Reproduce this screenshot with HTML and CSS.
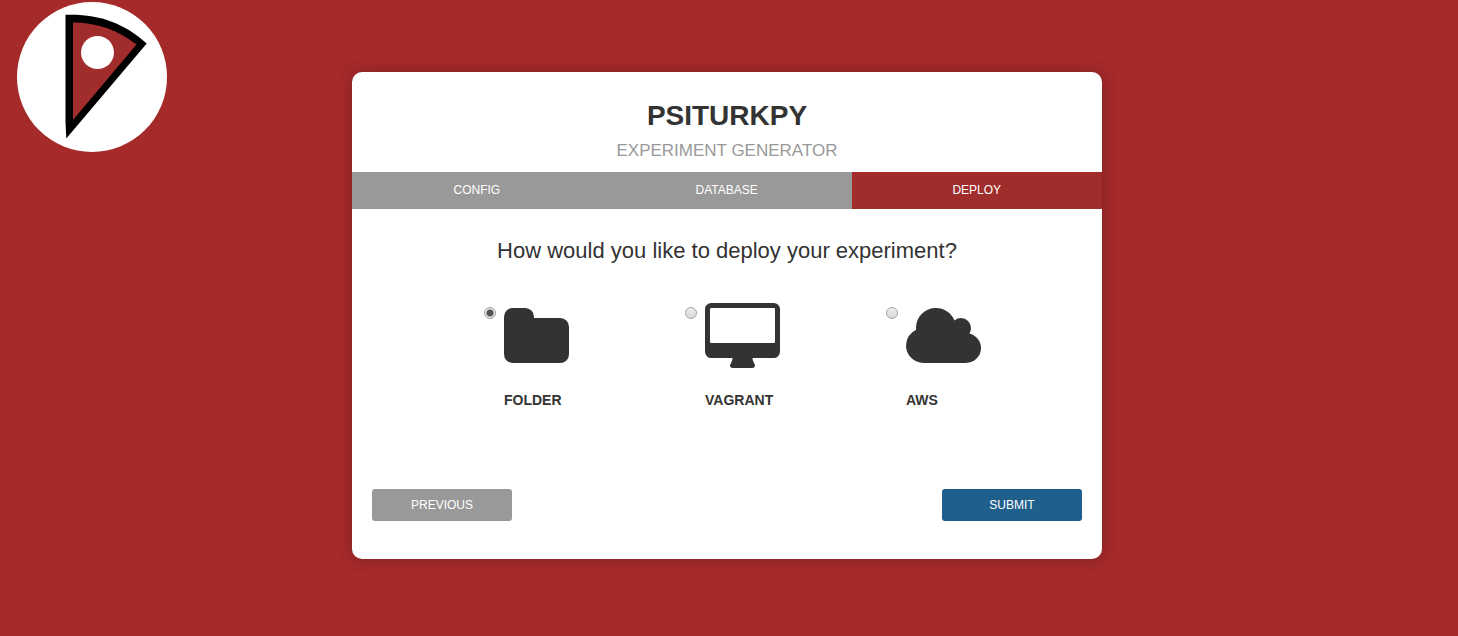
FILE: index.html
```html
<!DOCTYPE html>
<html lang="en">
<head>
<meta charset="utf-8">
<meta name="viewport" content="width=device-width, initial-scale=1">
<title>PsiturkPy Experiment Generator</title>
<link rel="stylesheet" href="styles.css">
</head>
<body>
<div class="page">
  <header class="brand">
    <svg class="logo" viewBox="0 0 150 150" role="img" aria-label="PsiturkPy logo">
      <circle cx="75" cy="75" r="75" fill="#fff"/>
      <path d="M48.500 12.800C80 11.500 106 20 129.700 41.500L49.300 136.500L48.500 120Z" fill="#000"/>
      <path d="M56 20.500C80 20.500 101 28 119.500 42.500L56 118Z" fill="#a02c2c"/>
      <circle cx="80.500" cy="50.500" r="16.500" fill="#fff"/>
    </svg>
  </header>
  <main class="card">
    <h1 class="title">PSITURKPY</h1>
    <p class="subtitle">EXPERIMENT GENERATOR</p>
    <ol class="steps">
      <li class="step">CONFIG</li>
      <li class="step">DATABASE</li>
      <li class="step step-active" aria-current="step">DEPLOY</li>
    </ol>
    <form class="deploy">
      <h2 class="question" id="question">How would you like to deploy your experiment?</h2>
      <div class="options" role="radiogroup" aria-labelledby="question">
        <div class="option">
          <input class="radio" type="radio" name="target" id="folder" value="folder" checked>
          <label class="choice" for="folder">
            <svg class="icon" viewBox="0 0 1920 1664" aria-hidden="true"><path d="M1664 608v704q0 92-66 158t-158 66H224q-92 0-158-66T0 1312V352q0-92 66-158t158-66h320q92 0 158 66t66 158v32h672q92 0 158 66t66 158z"/></svg>
            <span>FOLDER</span>
          </label>
        </div>
        <div class="option">
          <input class="radio" type="radio" name="target" id="vagrant" value="vagrant">
          <label class="choice" for="vagrant">
            <svg class="icon" viewBox="0 0 1920 1664" aria-hidden="true"><path fill-rule="evenodd" d="M1792 992V160q0-13-9.500-22.500T1760 128H160q-13 0-22.500 9.500T128 160v832q0 13 9.500 22.500T160 1024h1600q13 0 22.500-9.500t9.500-22.500zM1920 160v1088q0 66-47 113t-113 47h-544q0 37 16 77.500t32 71 16 43.500q0 26-19 45t-45 19H704q-26 0-45-19t-19-45q0-14 16-44t32-70 16-78H160q-66 0-113-47T0 1248V160Q0 94 47 47T160 0h1600q66 0 113 47t47 113z"/></svg>
            <span>VAGRANT</span>
          </label>
        </div>
        <div class="option">
          <input class="radio" type="radio" name="target" id="aws" value="aws">
          <label class="choice" for="aws">
            <svg class="icon" viewBox="0 0 1920 1664" aria-hidden="true"><path d="M1920 1152q0 159-112.500 271.500T1536 1536H448q-185 0-316.500-131.500T0 1088q0-132 71-241.500T258 682q-2-28-2-42 0-212 150-362t362-150q158 0 286.500 88T1242 446q70-62 166-62 106 0 181 75t75 181q0 75-41 138 129 30 213 134.500t84 239.500z"/></svg>
            <span>AWS</span>
          </label>
        </div>
      </div>
      <div class="actions">
        <button class="button" type="button">PREVIOUS</button>
        <button class="button button-primary" type="submit">SUBMIT</button>
      </div>
    </form>
  </main>
</div>
</body>
</html>
```
FILE: styles.css
```css
* {
  box-sizing: border-box;
}

body {
  margin: 0;
  background: #a52a2a;
  color: #333;
  font-family: "Liberation Sans", Arial, sans-serif;
}

.page {
  display: grid;
  grid-template-columns: 1fr minmax(0, 750px) 1fr;
  align-items: start;
  padding-right: 4px;
}

.brand {
  padding: 2px 17px;
}

.logo {
  display: block;
  width: 150px;
  height: 150px;
}

.card {
  margin: 72px 0;
  padding-top: 28px;
  background: #fff;
  border-radius: 10px;
  box-shadow: 0 0 15px 1px rgba(0, 0, 0, 0.2);
}

.title {
  margin: 0;
  font-size: 28px;
  line-height: 32px;
  text-align: center;
}

.subtitle {
  margin: 8px 0 10px;
  color: #999;
  font-size: 17px;
  line-height: 22px;
  text-align: center;
}

.steps {
  display: flex;
  margin: 0;
  padding: 0;
  list-style: none;
}

.step {
  width: 33.3%;
  padding: 8px 0;
  background: #999;
  color: #fff;
  font-size: 12px;
  line-height: 21px;
  text-align: center;
}

.step-active {
  flex-grow: 1;
  background: #a02c2c;
}

.deploy {
  padding: 28px 20px 38px;
}

.question {
  margin: 0;
  font-size: 22px;
  font-weight: normal;
  line-height: 28px;
  text-align: center;
}

.options {
  display: grid;
  grid-template-columns: repeat(3, 201px);
  margin-top: 38px;
  padding-left: 112px;
}

.option {
  display: flex;
  align-items: flex-start;
  gap: 8px;
}

.radio {
  appearance: none;
  flex: none;
  width: 12px;
  height: 12px;
  margin: 4px 0 0;
  border: 1px solid #a3a3a3;
  border-radius: 50%;
  background: linear-gradient(#ededed, #d8d8d8);
}

.radio:checked {
  background: radial-gradient(circle, #555 0 3px, #e6e6e6 4px);
}

.choice {
  display: flex;
  flex-direction: column;
  gap: 24px;
  font-size: 14px;
  font-weight: bold;
  line-height: 16px;
}

.icon {
  display: block;
  width: 75px;
  height: 65px;
  fill: #333;
}

.actions {
  display: flex;
  justify-content: space-between;
  margin-top: 81px;
}

.button {
  width: 140px;
  height: 32px;
  border: 0;
  border-radius: 3px;
  background: #999;
  color: #fff;
  font: 12px "Liberation Sans", Arial, sans-serif;
}

.button-primary {
  background: #1f5f8b;
}
```
